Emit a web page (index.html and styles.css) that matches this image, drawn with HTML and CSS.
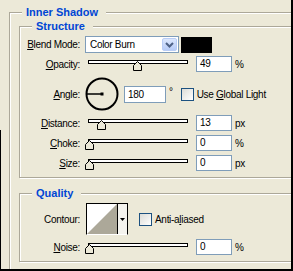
FILE: index.html
```html
<!doctype html>
<html lang="en">
<head>
    <meta charset="UTF-8">
    <title>Inner Shadow</title>

    <link rel="stylesheet" href="styles.css">
</head>
<body>

<div class="frame">
    <div class="group group--outer">
        <div class="legend legend--outer">Inner Shadow</div>

        <div class="group group--structure">
            <div class="legend">Structure</div>

            <div class="row row--blend">
                <div class="label"><u>B</u>lend Mode:</div>
                <div class="combo">
                    <span class="combo__text">Color Burn</span>
                    <span class="combo__btn">
                        <svg width="9" height="6" viewBox="0 0 9 6"><path d="M1 1 L4.5 4.5 L8 1" fill="none" stroke="#4d6185" stroke-width="2"/></svg>
                    </span>
                </div>
                <div class="swatch"></div>
            </div>

            <div class="row row--slider">
                <div class="label"><u>O</u>pacity:</div>
                <div class="slider">
                    <div class="slider__track"></div>
                    <svg class="slider__thumb" style="left: 45px" width="9" height="10" viewBox="0 0 9 10"><path d="M4.5 0.5 L8.5 4.5 L8.5 9.5 L0.5 9.5 L0.5 4.5 Z" fill="#ece9d8" stroke="#000"/></svg>
                </div>
                <div class="field">49</div>
                <div class="unit">%</div>
            </div>

            <div class="row row--angle">
                <div class="label"><u>A</u>ngle:</div>
                <svg class="dial" width="34" height="34" viewBox="0 0 34 34">
                    <circle cx="17" cy="17" r="15.5" fill="none" stroke="#000" stroke-width="2"/>
                    <line x1="2" y1="17" x2="17" y2="17" stroke="#000" stroke-width="1.5"/>
                    <rect x="15.5" y="15.5" width="3" height="3" fill="#000"/>
                </svg>
                <div class="field field--angle">180</div>
                <div class="unit unit--deg">°</div>
                <div class="check"></div>
                <div class="check-label">Use <u>G</u>lobal Light</div>
            </div>

            <div class="row row--slider row--distance">
                <div class="label"><u>D</u>istance:</div>
                <div class="slider">
                    <div class="slider__track"></div>
                    <svg class="slider__thumb" style="left: 9px" width="9" height="10" viewBox="0 0 9 10"><path d="M4.5 0.5 L8.5 4.5 L8.5 9.5 L0.5 9.5 L0.5 4.5 Z" fill="#ece9d8" stroke="#000"/></svg>
                </div>
                <div class="field">13</div>
                <div class="unit">px</div>
            </div>

            <div class="row row--slider">
                <div class="label"><u>C</u>hoke:</div>
                <div class="slider">
                    <div class="slider__track"></div>
                    <svg class="slider__thumb" style="left: -3px" width="9" height="10" viewBox="0 0 9 10"><path d="M4.5 0.5 L8.5 4.5 L8.5 9.5 L0.5 9.5 L0.5 4.5 Z" fill="#ece9d8" stroke="#000"/></svg>
                </div>
                <div class="field">0</div>
                <div class="unit">%</div>
            </div>

            <div class="row row--slider">
                <div class="label"><u>S</u>ize:</div>
                <div class="slider">
                    <div class="slider__track"></div>
                    <svg class="slider__thumb" style="left: -3px" width="9" height="10" viewBox="0 0 9 10"><path d="M4.5 0.5 L8.5 4.5 L8.5 9.5 L0.5 9.5 L0.5 4.5 Z" fill="#ece9d8" stroke="#000"/></svg>
                </div>
                <div class="field">0</div>
                <div class="unit">px</div>
            </div>
        </div>

        <div class="group group--quality">
            <div class="legend">Quality</div>

            <div class="row row--contour">
                <div class="label">Contour:</div>
                <div class="contour">
                    <svg class="contour__graph" width="30" height="30" viewBox="0 0 30 30"><path d="M0 30 L30 0 L30 30 Z" fill="#aca899"/></svg>
                    <span class="contour__btn">
                        <svg width="5" height="3" viewBox="0 0 5 3"><path d="M0 0 H5 L2.5 3 Z" fill="#000"/></svg>
                    </span>
                </div>
                <div class="check check--aa"></div>
                <div class="check-label">Anti-a<u>l</u>iased</div>
            </div>

            <div class="row row--slider row--noise">
                <div class="label"><u>N</u>oise:</div>
                <div class="slider">
                    <div class="slider__track"></div>
                    <svg class="slider__thumb" style="left: -3px" width="9" height="10" viewBox="0 0 9 10"><path d="M4.5 0.5 L8.5 4.5 L8.5 9.5 L0.5 9.5 L0.5 4.5 Z" fill="#ece9d8" stroke="#000"/></svg>
                </div>
                <div class="field">0</div>
                <div class="unit">%</div>
            </div>
        </div>
    </div>
</div>

</body>
</html>
```

FILE: styles.css
```css
* {
    margin: 0;
    padding: 0;
    box-sizing: border-box;
}

body {
    background: #ece9d8;
    font-family: "Liberation Sans", Arial, sans-serif;
    font-size: 10px;
    letter-spacing: -0.3px;
    color: #000;
}

.frame {
    position: relative;
    width: 293px;
    height: 271px;
    border-right: 2px solid #000;
    border-bottom: 2px solid #000;
    overflow: hidden;
}

/* dark window edge on the lower left */
.frame::before {
    content: "";
    position: absolute;
    left: 0;
    top: 130px;
    bottom: 0;
    width: 1px;
    background: #000;
}

.group {
    border: 1px solid #aca899;
    box-shadow: inset 1px 1px #fff, 1px 1px #fff;
}

.group--outer {
    margin: 12px 0 0 9px;
    width: 300px;
    height: 300px;
}

.group--structure {
    margin: 7px 0 0 9px;
    width: 290px;
    height: 152px;
}

.group--quality {
    margin: 15px 0 0 9px;
    width: 290px;
    height: 69px;
}

.legend {
    width: fit-content;
    margin: -7px 0 0 12px;
    padding: 0 8px 0 4px;
    background: #ece9d8;
    color: #0046d5;
    font-size: 11px;
    font-weight: bold;
    letter-spacing: 0;
    line-height: 13px;
}

.row {
    display: flex;
    align-items: center;
}

.label {
    width: 60px;
    text-align: right;
    white-space: nowrap;
}

/* blend mode */
.row--blend {
    margin-top: 3px;
    height: 17px;
}

.combo {
    display: flex;
    align-items: center;
    justify-content: space-between;
    width: 94px;
    height: 17px;
    margin-left: 5px;
    padding: 0 1px 0 4px;
    border: 1px solid #7f9db9;
    background: #fff;
}

.combo__btn {
    display: flex;
    align-items: center;
    justify-content: center;
    width: 15px;
    height: 13px;
    border: 1px solid #b9cdf6;
    border-radius: 2px;
    background: linear-gradient(#dce7fd, #b6cbf7);
}

.swatch {
    width: 31px;
    height: 16px;
    margin-left: 2px;
    background: #000;
}

/* sliders */
.row--slider {
    margin-top: 3px;
    height: 16px;
}

.row--distance {
    margin-top: 4px;
}

.row--slider + .row--slider {
    margin-top: 4px;
}

.slider {
    position: relative;
    width: 100px;
    height: 16px;
    margin-left: 8px;
}

.slider__track {
    height: 4px;
    margin-top: 4px;
    border: 1px solid #000;
    background: #fff;
}

.slider__thumb {
    position: absolute;
    top: 5px;
    display: block;
}

.field {
    width: 36px;
    height: 16px;
    margin-left: 8px;
    padding-left: 3px;
    border: 1px solid #7f9db9;
    background: #fff;
    line-height: 14px;
}

.unit {
    margin-left: 3px;
}

/* angle */
.row--angle {
    margin-top: 5px;
    height: 34px;
}

.dial {
    display: block;
    margin-left: 5px;
}

.field--angle {
    width: 42px;
    height: 17px;
    margin-left: 5px;
    line-height: 15px;
}

.unit--deg {
    margin: -6px 0 0 3px;
}

.check {
    width: 13px;
    height: 13px;
    margin-left: 8px;
    border: 1px solid #1c5180;
    background: linear-gradient(135deg, #dcdcd7, #fff);
}

.check-label {
    margin-left: 3px;
    white-space: nowrap;
}

/* quality */
.row--contour {
    margin-top: 3px;
    height: 32px;
}

.contour {
    display: flex;
    width: 42px;
    height: 32px;
    margin-left: 6px;
    border: 1px solid #000;
    border-bottom-color: #fff;
}

.contour__graph {
    display: block;
    width: 30px;
    height: 30px;
    background: #fff;
}

.contour__btn {
    display: flex;
    align-items: center;
    justify-content: center;
    width: 10px;
    height: 30px;
    border-left: 1px solid #000;
    background: #f4f3ee;
}

.check--aa {
    margin-left: 11px;
}

.row--noise {
    margin-top: 4px;
}
```
